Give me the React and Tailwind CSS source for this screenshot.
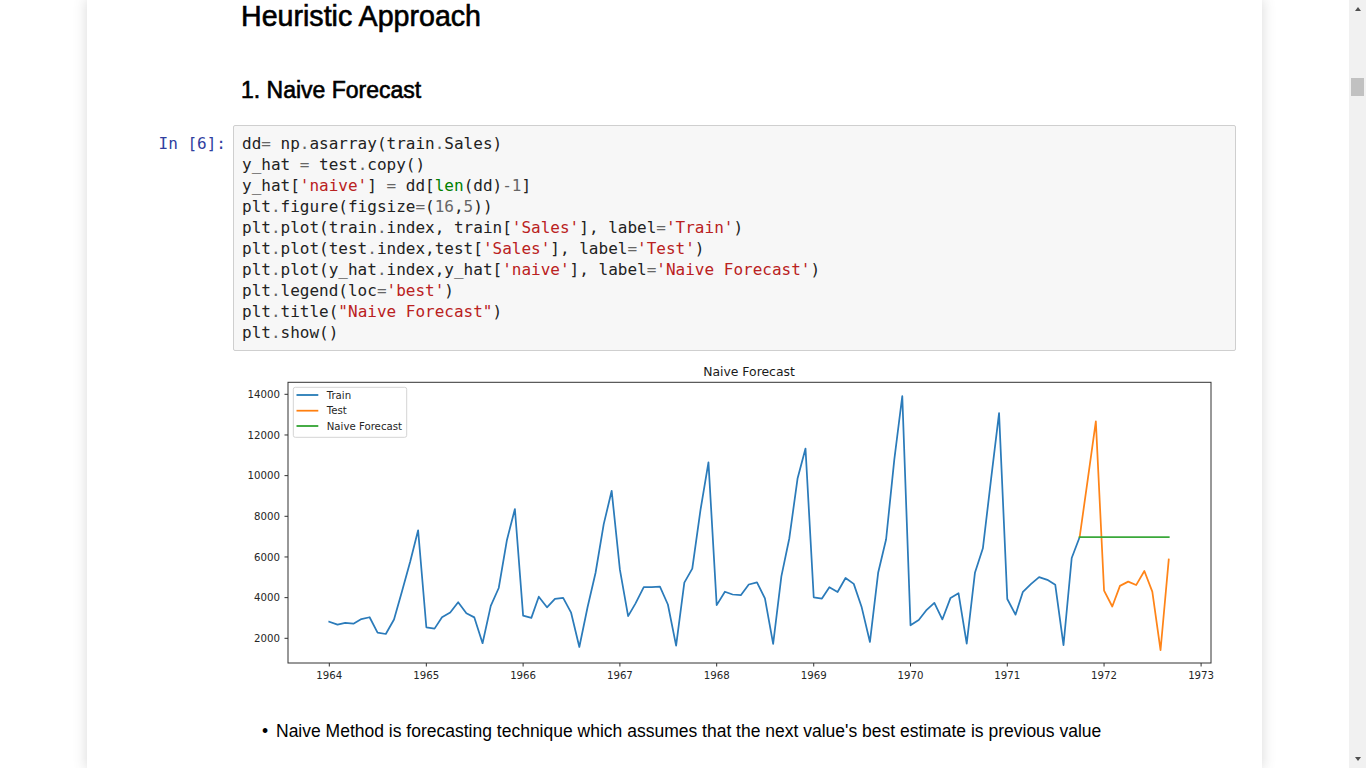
import React from "react";

const TRAIN = [
  2815, 2672, 2755, 2721, 2946, 3036, 2282, 2212, 2922, 4301, 5764, 7312,
  2541, 2475, 3031, 3266, 3776, 3230, 3028, 1759, 3595, 4474, 6838, 8357,
  3113, 3006, 4047, 3523, 3937, 3986, 3260, 1573, 3528, 5211, 7614, 9254,
  5375, 3088, 3718, 4514, 4520, 4539, 3663, 1643, 4739, 5428, 8314, 10651,
  3633, 4292, 4154, 4121, 4647, 4753, 3965, 1723, 5048, 6922, 9858, 11331,
  4016, 3957, 4510, 4276, 4968, 4677, 3523, 1821, 5222, 6872, 10803, 13916,
  2639, 2899, 3370, 3740, 2927, 3986, 4217, 1738, 5221, 6424, 9842, 13076,
  3934, 3162, 4286, 4676, 5010, 4874, 4633, 1659, 5951, 6981,
];
const TEST = [6981, 9851, 12670, 4348, 3564, 4577, 4788, 4618, 5312, 4298, 1413, 5877];
const TEST_START = 93; // 1971-10

const X0 = 329.3;
const PX_DAY = (1201.1 - 329.3) / 3288;
const BASE = Date.UTC(1964, 0, 1);
const xOfMonth = (m) =>
  X0 + ((Date.UTC(1964 + Math.floor(m / 12), m % 12, 1) - BASE) / 86400000) * PX_DAY;
const xOfYear = (y) => X0 + ((Date.UTC(y, 0, 1) - BASE) / 86400000) * PX_DAY;
const yOf = (v) => 638.3 - (v - 2000) * 0.020333;

const pts = (vals, start) =>
  vals.map((v, i) => `${xOfMonth(start + i).toFixed(2)},${yOf(v).toFixed(2)}`).join(" ");

function Chart() {
  const yTicks = [2000, 4000, 6000, 8000, 10000, 12000, 14000];
  const xTicks = [1964, 1965, 1966, 1967, 1968, 1969, 1970, 1971, 1972, 1973];
  const font = "'DejaVu Sans', sans-serif";
  const legend = [
    ["Train", "#1f77b4", 395],
    ["Test", "#ff7f0e", 410.7],
    ["Naive Forecast", "#2ca02c", 426],
  ];
  return (
    <svg
      width="1003"
      height="345"
      viewBox="233 351 1003 345"
      className="block"
      style={{ fontFamily: font }}
    >
      <text x="749" y="375.5" fontSize="12.4" textAnchor="middle" fill="#1a1a1a">
        Naive Forecast
      </text>
      <g fill="none" strokeWidth="1.75" strokeLinejoin="round" strokeLinecap="square">
        <polyline points={pts(TRAIN, 0)} stroke="#2b7bba" />
        <polyline points={pts(TEST, TEST_START)} stroke="#ff8418" />
        <polyline
          points={pts(new Array(12).fill(6981), TEST_START)}
          stroke="#3aa83a"
        />
      </g>
      <rect x="288" y="382.3" width="923" height="280.7" fill="none" stroke="#333" strokeWidth="1" />
      {yTicks.map((t) => (
        <g key={t}>
          <line x1="284.5" x2="288" y1={yOf(t)} y2={yOf(t)} stroke="#333" strokeWidth="1" />
          <text x="280" y={yOf(t) + 3.8} fontSize="10.2" textAnchor="end" fill="#262626">
            {t}
          </text>
        </g>
      ))}
      {xTicks.map((t) => (
        <g key={t}>
          <line x1={xOfYear(t)} x2={xOfYear(t)} y1="663" y2="666.5" stroke="#333" strokeWidth="1" />
          <text x={xOfYear(t)} y="679.2" fontSize="10.2" textAnchor="middle" fill="#262626">
            {t}
          </text>
        </g>
      ))}
      <rect
        x="293.3"
        y="387.3"
        width="113.4"
        height="50"
        rx="2"
        fill="white"
        fillOpacity="0.8"
        stroke="#d4d4d4"
        strokeWidth="1"
      />
      {legend.map(([label, color, y]) => (
        <g key={label}>
          <line x1="296.5" x2="318.3" y1={y} y2={y} stroke={color} strokeWidth="1.75" />
          <text x="326.7" y={y + 3.6} fontSize="10.2" fill="#262626">
            {label}
          </text>
        </g>
      ))}
    </svg>
  );
}

const CODE = [
  "dd= np.asarray(train.Sales)",
  "y_hat = test.copy()",
  "y_hat['naive'] = dd[len(dd)-1]",
  "plt.figure(figsize=(16,5))",
  "plt.plot(train.index, train['Sales'], label='Train')",
  "plt.plot(test.index,test['Sales'], label='Test')",
  "plt.plot(y_hat.index,y_hat['naive'], label='Naive Forecast')",
  "plt.legend(loc='best')",
  'plt.title("Naive Forecast")',
  "plt.show()",
];

function tokenize(line) {
  const re = /('[^']*'|"[^"]*"|\blen\b|\d+|[=.\-]|[A-Za-z_]\w*|\s+|.)/g;
  const out = [];
  let m;
  let i = 0;
  while ((m = re.exec(line))) {
    const t = m[0];
    let cls = "";
    if (t[0] === "'" || t[0] === '"') cls = "text-[#BA2121]";
    else if (t === "len") cls = "text-[#008000]";
    else if (/^\d+$/.test(t) || /^[=.\-]$/.test(t)) cls = "text-[#666666]";
    out.push(
      <span key={i++} className={cls}>
        {t}
      </span>
    );
  }
  return out;
}

export default function App() {
  return (
    <div className="flex h-[768px] w-[1366px] overflow-hidden bg-white font-['Liberation_Sans',Arial,sans-serif] text-black">
      <div className="flex-1 min-w-0">
        <div className="ml-[87px] h-full w-[1175px] bg-white shadow-[0_0_12px_1px_rgba(87,87,87,0.2)]">
          <div className="pl-[154px] [-webkit-text-stroke:0.6px_black]">
            <div className="h-[32px] text-[28.6px] leading-[32px]">Heuristic Approach</div>
            <div className="mt-[42px] h-[32px] text-[23px] leading-[32px]">1. Naive Forecast</div>
          </div>

          <div className="mt-[19px] flex">
            <div className="w-[146px] shrink-0 pr-[7px] pt-[8px] text-right font-['DejaVu_Sans_Mono',monospace] text-[16px] leading-[21px] text-[#303F9F] whitespace-pre">
              In [6]:
            </div>
            <div className="w-[1003px] rounded-[2px] border border-[#cfcfcf] bg-[#f7f7f7] px-[8px] py-[7px] font-['DejaVu_Sans_Mono',monospace] text-[16px] leading-[21px] text-[#222]">
              {CODE.map((l, i) => (
                <div key={i} className="whitespace-pre">
                  {tokenize(l)}
                </div>
              ))}
            </div>
          </div>

          <div className="flex">
            <div className="w-[146px] shrink-0" />
            <Chart />
          </div>

          <div className="mt-[23px] flex pl-[175px] text-[17.5px] leading-[24px]">
            <span className="w-[14px] shrink-0">•</span>
            <span>Naive Method is forecasting technique which assumes that the next value's best estimate is previous value</span>
          </div>
        </div>
      </div>
      <div className="flex w-[17px] shrink-0 flex-col items-center bg-[#f1f1f1]">
        <div className="mt-[7px] h-0 w-0 border-x-[3.5px] border-b-[4px] border-x-transparent border-b-[#505050]" />
        <div className="mt-[67px] h-[18px] w-[13px] bg-[#c1c1c1]" />
        <div className="flex-1" />
        <div className="mb-[7px] h-0 w-0 border-x-[3.5px] border-t-[4px] border-x-transparent border-t-[#505050]" />
      </div>
    </div>
  );
}
